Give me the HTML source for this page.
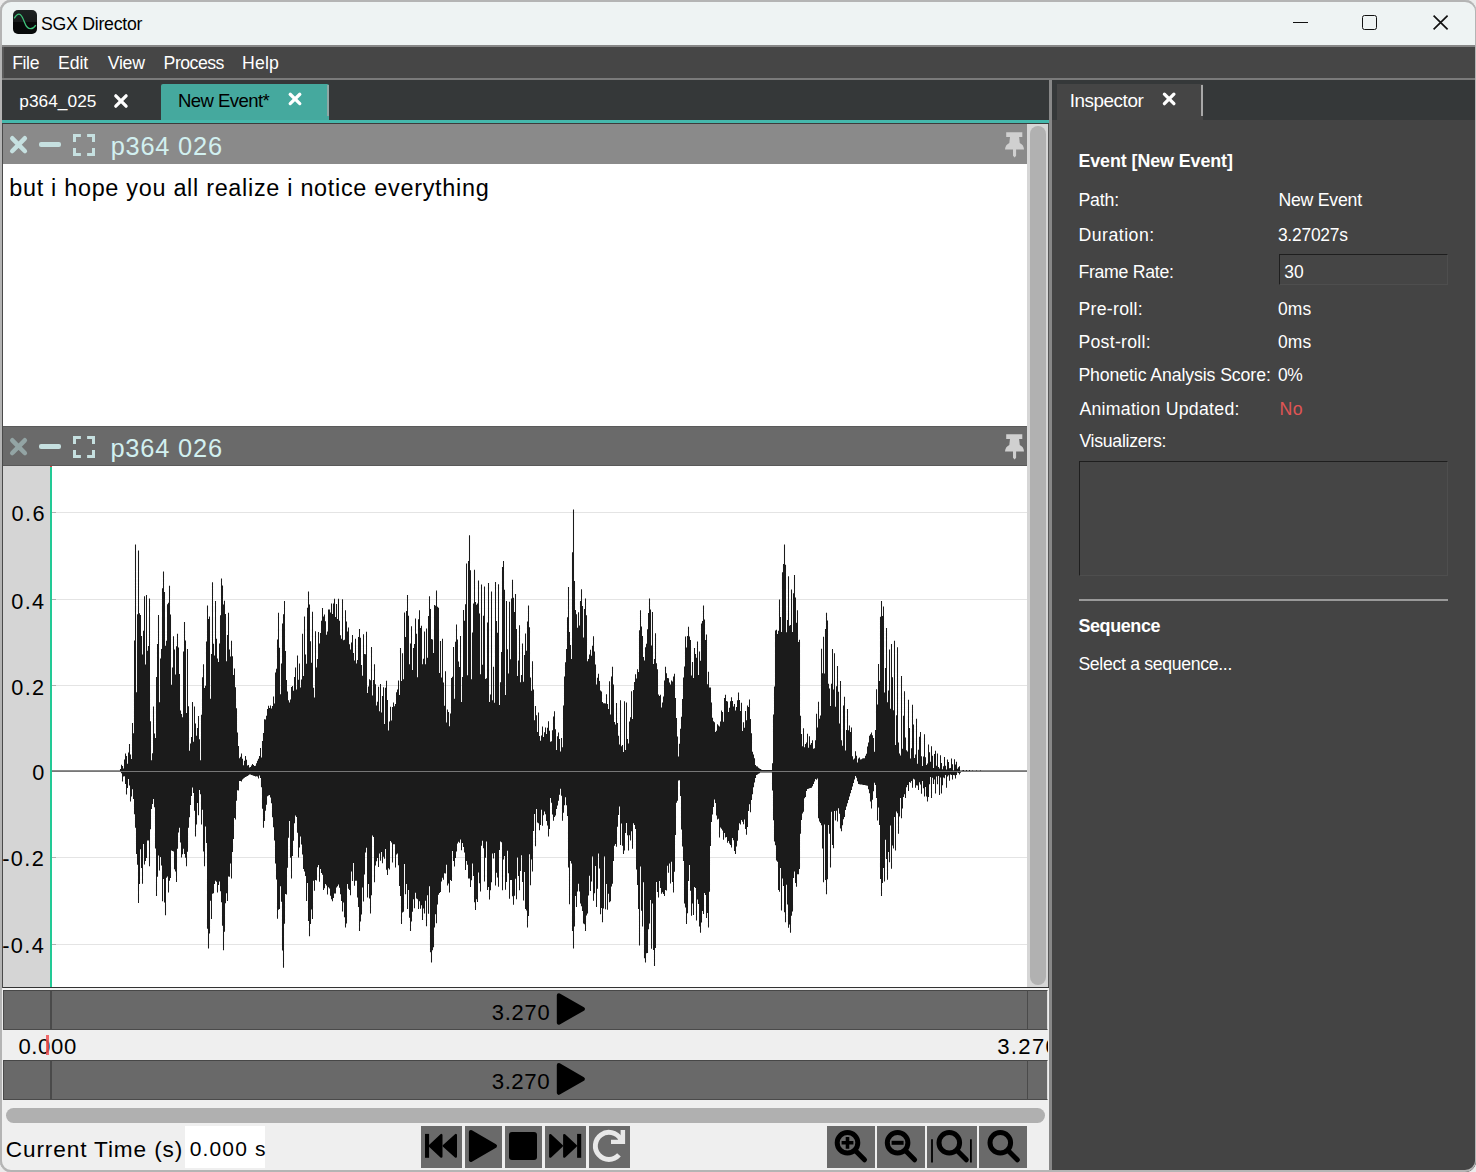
<!DOCTYPE html>
<html><head><meta charset="utf-8">
<style>
*{margin:0;padding:0;box-sizing:border-box}
html,body{width:1476px;height:1172px;overflow:hidden;background:#ececec;font-family:"Liberation Sans",sans-serif}
.a{position:absolute}
.t{position:absolute;white-space:nowrap;line-height:1}
svg{position:absolute;overflow:visible}
#win{position:absolute;left:0;top:0;width:1476px;height:1172px;border-radius:11px;overflow:hidden;background:#444}
#bord{position:absolute;left:0;top:0;width:1476px;height:1172px;border:2px solid #b4b4b4;border-right-width:1.5px;border-radius:11px;pointer-events:none}
</style></head><body>
<div id="win">
<div class="a" style="left:0px;top:0px;width:1476px;height:45px;background:#eef3f3;"></div>
<div class="a" style="left:13px;top:10px;width:24px;height:24px;border-radius:5px;background:linear-gradient(#1d2222 0%,#171b1b 48%,#080a0a 52%,#070909 100%)"></div>
<svg style="left:13px;top:10px" width="24" height="24" viewBox="0 0 24 24"><path d="M1.3 8.4 C 3 5.2, 5 4.1, 6 4.1 C 8.5 4.1, 10 8, 11.6 12.5 C 13 16.5, 15 18.7, 17.7 18.7 C 19.8 18.7, 21.5 17, 22.8 15.1" fill="none" stroke="#3fc27a" stroke-width="1.3"/></svg>
<div class="t" style="left:41px;top:15.8px;font-size:17.68px;letter-spacing:-0.245px;color:#000;">SGX Director</div>
<div class="a" style="left:1293px;top:21.6px;width:15px;height:1.7px;background:#111;"></div>
<div class="a" style="left:1362.3px;top:15.3px;width:14.6px;height:14.4px;border:1.8px solid #111;border-radius:2.5px"></div>
<svg style="left:1433px;top:15px" width="16" height="15" viewBox="0 0 16 15"><path d="M0.6 0.6L14.6 14.4M14.6 0.6L0.6 14.4" stroke="#111" stroke-width="1.7"/></svg>
<div class="a" style="left:0px;top:44.9px;width:1476px;height:2.1px;background:#878787;"></div>
<div class="a" style="left:0px;top:47px;width:1476px;height:31px;background:#464646;"></div>
<div class="a" style="left:2px;top:47px;width:2px;height:31px;background:#5a5a5a;"></div>
<div class="a" style="left:0px;top:77.8px;width:1476px;height:2.2px;background:#7a7a7a;"></div>
<div class="t" style="left:12.2px;top:55.3px;font-size:17.68px;letter-spacing:-0.4px;color:#fff;">File</div>
<div class="t" style="left:58px;top:55.3px;font-size:17.68px;letter-spacing:-0.067px;color:#fff;">Edit</div>
<div class="t" style="left:107.7px;top:55.3px;font-size:17.68px;letter-spacing:-0.233px;color:#fff;">View</div>
<div class="t" style="left:163.6px;top:55.3px;font-size:17.68px;letter-spacing:-0.5px;color:#fff;">Process</div>
<div class="t" style="left:242px;top:55.3px;font-size:17.68px;letter-spacing:0.167px;color:#fff;">Help</div>
<div class="a" style="left:0px;top:80px;width:1049px;height:40px;background:#353839;"></div>
<div class="t" style="left:19.3px;top:92.9px;font-size:17.29px;letter-spacing:0.029px;color:#fff;">p364_025</div>
<svg style="left:0;top:0" width="1" height="1"><path d="M115.8 95.8L126.1 106.2M126.1 95.8L115.8 106.2" stroke="#fff" stroke-width="3.3" stroke-linecap="round"/></svg>
<div class="a" style="left:161px;top:84px;width:168px;height:36px;background:#45a99e;border-radius:2px 2px 0 0;"></div>
<div class="a" style="left:327px;top:85px;width:1.5px;height:31px;background:#8fa8a5;"></div>
<div class="t" style="left:178px;top:92.0px;font-size:18.55px;letter-spacing:-0.556px;color:#000;">New Event*</div>
<svg style="left:0;top:0" width="1" height="1"><path d="M290.2 94.3L299.8 103.6M299.8 94.3L290.2 103.6" stroke="#fff" stroke-width="3.3" stroke-linecap="round"/></svg>
<div class="a" style="left:0px;top:120px;width:1049px;height:3px;background:#45b8ac;"></div>
<div class="a" style="left:0px;top:123px;width:1049px;height:1px;background:#3c3c3c;"></div>
<div class="a" style="left:0px;top:124px;width:1049px;height:1048px;background:#efefef;"></div>
<div class="a" style="left:2px;top:124px;width:1px;height:864px;background:#4a4a4a;"></div>
<div class="a" style="left:3px;top:124px;width:1024px;height:39.6px;background:#8a8a8a;"></div>
<svg style="left:0;top:0" width="1" height="1"><path d="M12.3 138.3L24.8 151.0M24.8 138.3L12.3 151.0" stroke="#c6e0e0" stroke-width="4.6" stroke-linecap="round"/></svg>
<div class="a" style="left:39px;top:142.2px;width:22px;height:4.8px;background:#c6e0e0;border-radius:2px;"></div>
<svg style="left:0;top:0" width="1" height="1"><path d="M74.5 141.9V135.5H80.9 M87.1 135.5H93.5V141.9 M93.5 148.1V154.5H87.1 M80.9 154.5H74.5V148.1" fill="none" stroke="#c6e0e0" stroke-width="3"/></svg>
<svg style="left:1005px;top:132px" width="20" height="26" viewBox="0 0 20 26"><path d="M1.2 0.3H17.3V4.9H14.1L14.8 11C17.5 12.3 18.9 14.5 19 17.5H11.1V23.8L9.6 25.5L8 23.8V17.5H0C0.2 14.5 1.6 12.3 4.3 11L5 4.9H1.2Z" fill="#d0d0d0"/></svg>
<div class="t" style="left:110.7px;top:134.0px;font-size:25.43px;letter-spacing:0.757px;color:#d2f0f0;">p364 026</div>
<div class="a" style="left:3px;top:163.6px;width:1024px;height:262.2px;background:#fff;"></div>
<div class="t" style="left:9.2px;top:176.6px;font-size:23.42px;letter-spacing:0.709px;color:#000;">but i hope you all realize i notice everything</div>
<div class="a" style="left:3px;top:425.8px;width:1024px;height:0.8px;background:#5a5a5a;"></div>
<div class="a" style="left:3px;top:426.5px;width:1024px;height:38.8px;background:#6a6a6a;"></div>
<div class="a" style="left:3px;top:465.2px;width:1024px;height:0.8px;background:#595959;"></div>
<svg style="left:0;top:0" width="1" height="1"><path d="M12.3 440.3L24.8 453.0M24.8 440.3L12.3 453.0" stroke="#93a4a4" stroke-width="4.6" stroke-linecap="round"/></svg>
<div class="a" style="left:39px;top:444.2px;width:22px;height:4.8px;background:#c6e0e0;border-radius:2px;"></div>
<svg style="left:0;top:0" width="1" height="1"><path d="M74.5 443.9V437.5H80.9 M87.1 437.5H93.5V443.9 M93.5 450.1V456.5H87.1 M80.9 456.5H74.5V450.1" fill="none" stroke="#c6e0e0" stroke-width="3"/></svg>
<svg style="left:1005px;top:434px" width="20" height="26" viewBox="0 0 20 26"><path d="M1.2 0.3H17.3V4.9H14.1L14.8 11C17.5 12.3 18.9 14.5 19 17.5H11.1V23.8L9.6 25.5L8 23.8V17.5H0C0.2 14.5 1.6 12.3 4.3 11L5 4.9H1.2Z" fill="#d0d0d0"/></svg>
<div class="t" style="left:110.4px;top:436.2px;font-size:25.43px;letter-spacing:0.814px;color:#d2f0f0;">p364 026</div>
<div class="a" style="left:3px;top:466px;width:47px;height:521.3px;background:#d5d5d5;"></div>
<div class="a" style="left:50px;top:466px;width:1.6px;height:521.3px;background:#22c995;"></div>
<div class="a" style="left:50px;top:466px;width:2px;height:1px;background:#e04040;"></div>
<div class="a" style="left:52px;top:466px;width:975px;height:521.3px;background:#fff;"></div>
<div class="a" style="left:52px;top:511.6px;width:975px;height:1.2px;background:#e4e4e4;"></div>
<div class="a" style="left:52px;top:511.6px;width:4px;height:1.2px;background:#b0b0b0;"></div>
<div class="a" style="left:52px;top:598.6999999999999px;width:975px;height:1.2px;background:#e4e4e4;"></div>
<div class="a" style="left:52px;top:598.6999999999999px;width:4px;height:1.2px;background:#b0b0b0;"></div>
<div class="a" style="left:52px;top:684.8px;width:975px;height:1.2px;background:#e4e4e4;"></div>
<div class="a" style="left:52px;top:684.8px;width:4px;height:1.2px;background:#b0b0b0;"></div>
<div class="a" style="left:52px;top:770.6px;width:975px;height:1.2px;background:#e4e4e4;"></div>
<div class="a" style="left:52px;top:770.6px;width:4px;height:1.2px;background:#b0b0b0;"></div>
<div class="a" style="left:52px;top:856.6999999999999px;width:975px;height:1.2px;background:#e4e4e4;"></div>
<div class="a" style="left:52px;top:856.6999999999999px;width:4px;height:1.2px;background:#b0b0b0;"></div>
<div class="a" style="left:52px;top:943.6px;width:975px;height:1.2px;background:#e4e4e4;"></div>
<div class="a" style="left:52px;top:943.6px;width:4px;height:1.2px;background:#b0b0b0;"></div>
<div class="t" style="left:11.6px;top:503.4px;font-size:21.71px;letter-spacing:1.35px;color:#000;">0.6</div>
<div class="t" style="left:11.3px;top:590.5px;font-size:21.71px;letter-spacing:1.35px;color:#000">0.4</div>
<div class="t" style="left:11.3px;top:676.6px;font-size:21.71px;letter-spacing:1.35px;color:#000">0.2</div>
<div class="t" style="left:32.3px;top:762.3px;font-size:21.71px;letter-spacing:1.35px;color:#000">0</div>
<div class="t" style="left:2.3px;top:848.4px;font-size:21.71px;letter-spacing:1.35px;color:#000">-0.2</div>
<div class="t" style="left:2.3px;top:935.0px;font-size:21.71px;letter-spacing:1.35px;color:#000">-0.4</div>
<svg style="left:0;top:0" width="1" height="1"><path d="M52.5 770.5V772.0M53.5 770.5V772.0M54.5 770.5V772.0M55.5 770.5V772.0M56.5 770.5V772.0M57.5 770.5V772.0M58.5 770.5V772.0M59.5 770.5V772.0M60.5 770.5V772.0M61.5 770.5V772.0M62.5 770.5V772.0M63.5 770.5V772.0M64.5 770.5V772.0M65.5 770.5V772.0M66.5 770.5V772.0M67.5 770.5V772.0M68.5 770.5V772.0M69.5 770.5V772.0M70.5 770.5V772.0M71.5 770.5V772.0M72.5 770.5V772.0M73.5 770.5V772.0M74.5 770.5V772.0M75.5 770.5V772.0M76.5 770.5V772.0M77.5 770.5V772.0M78.5 770.5V772.0M79.5 770.5V772.0M80.5 770.5V772.0M81.5 770.5V772.0M82.5 770.5V772.0M83.5 770.5V772.0M84.5 770.5V772.0M85.5 770.5V772.0M86.5 770.5V772.0M87.5 770.5V772.0M88.5 770.5V772.0M89.5 770.5V772.0M90.5 770.5V772.0M91.5 770.5V772.0M92.5 770.5V772.0M93.5 770.5V772.0M94.5 770.5V772.0M95.5 770.5V772.0M96.5 770.5V772.0M97.5 770.5V772.0M98.5 770.5V772.0M99.5 770.5V772.0M100.5 770.5V772.0M101.5 770.5V772.0M102.5 770.5V772.0M103.5 770.5V772.0M104.5 770.5V772.0M105.5 770.5V772.0M106.5 770.5V772.0M107.5 770.5V772.0M108.5 770.5V772.0M109.5 770.5V772.0M110.5 770.5V772.0M111.5 770.5V772.0M112.5 770.5V772.0M113.5 770.5V772.0M114.5 770.5V772.0M115.5 770.5V772.0M116.5 770.5V772.0M117.5 770.5V772.0M118.5 770.5V772.0M119.5 770.5V772.0M120.5 768.9V772.0M121.5 764.8V773.2M122.5 765.9V781.4M123.5 768.6V776.6M124.5 759.6V776.3M125.5 753.5V784.0M126.5 756.1V794.5M127.5 763.8V787.9M128.5 752.4V779.0M129.5 744.1V785.5M130.5 754.4V801.5M131.5 759.0V796.4M132.5 723.0V789.3M133.5 733.3V799.1M134.5 640.6V814.2M135.5 544.6V827.8M136.5 692.3V854.0M137.5 614.3V864.8M138.5 550.5V903.0M139.5 613.2V884.1M140.5 615.0V849.2M141.5 636.0V867.9M142.5 654.6V883.7M143.5 630.7V843.9M144.5 596.2V864.5M145.5 664.4V861.0M146.5 595.1V858.0M147.5 650.8V840.5M148.5 646.0V840.4M149.5 598.6V866.2M150.5 721.2V829.2M151.5 760.2V809.1M152.5 753.3V803.9M153.5 706.6V799.0M154.5 733.6V807.2M155.5 737.9V848.6M156.5 677.1V896.0M157.5 643.9V876.7M158.5 615.0V855.6M159.5 702.2V870.6M160.5 658.4V856.9M161.5 649.0V865.6M162.5 588.3V901.3M163.5 571.6V878.9M164.5 591.9V902.6M165.5 645.8V915.2M166.5 640.8V877.7M167.5 604.3V876.6M168.5 602.7V892.5M169.5 585.7V880.7M170.5 614.6V878.0M171.5 684.7V850.5M172.5 667.4V851.1M173.5 636.2V851.4M174.5 649.6V869.3M175.5 674.4V871.5M176.5 646.3V882.0M177.5 633.8V848.8M178.5 647.5V832.5M179.5 674.1V827.8M180.5 710.5V842.5M181.5 714.1V857.5M182.5 717.2V854.2M183.5 651.6V848.7M184.5 622.1V854.0M185.5 640.6V857.8M186.5 713.0V866.2M187.5 649.0V851.8M188.5 706.2V827.7M189.5 750.8V817.2M190.5 743.4V804.9M191.5 737.1V796.0M192.5 701.9V787.5M193.5 741.8V793.1M194.5 706.6V810.7M195.5 723.5V836.5M196.5 735.7V824.6M197.5 728.0V803.1M198.5 716.0V815.3M199.5 739.3V789.9M200.5 760.3V794.2M201.5 714.8V824.4M202.5 677.3V809.8M203.5 664.3V851.4M204.5 688.0V866.2M205.5 685.8V826.4M206.5 641.5V843.0M207.5 605.6V928.7M208.5 619.1V948.4M209.5 616.5V933.5M210.5 698.7V900.8M211.5 654.0V918.9M212.5 582.2V893.8M213.5 643.7V893.3M214.5 655.5V884.1M215.5 600.9V880.7M216.5 638.7V881.7M217.5 658.4V892.5M218.5 662.1V885.1M219.5 643.6V881.6M220.5 615.3V891.3M221.5 578.6V902.2M222.5 585.6V925.7M223.5 604.6V950.2M224.5 600.7V931.7M225.5 613.9V903.2M226.5 661.2V893.2M227.5 635.0V900.9M228.5 612.7V876.6M229.5 649.6V876.8M230.5 656.6V863.4M231.5 640.8V878.5M232.5 656.2V852.1M233.5 675.0V838.9M234.5 668.5V817.9M235.5 687.2V819.5M236.5 708.3V800.7M237.5 732.6V790.2M238.5 746.1V790.4M239.5 758.2V780.9M240.5 756.8V781.0M241.5 753.5V781.5M242.5 758.7V779.6M243.5 765.3V778.4M244.5 760.7V777.8M245.5 755.9V777.1M246.5 759.7V776.5M247.5 765.5V775.9M248.5 765.1V775.3M249.5 767.5V774.6M250.5 766.9V774.6M251.5 765.4V775.0M252.5 764.1V775.3M253.5 765.0V775.7M254.5 765.9V776.1M255.5 765.7V776.5M256.5 763.2V776.3M257.5 760.7V776.4M258.5 758.7V778.4M259.5 755.9V775.6M260.5 748.1V777.9M261.5 757.4V787.3M262.5 741.0V808.7M263.5 733.1V827.7M264.5 719.3V821.1M265.5 719.4V810.8M266.5 715.8V804.7M267.5 708.9V796.2M268.5 705.7V795.5M269.5 708.1V794.9M270.5 705.5V797.4M271.5 708.4V803.2M272.5 706.1V817.2M273.5 696.6V827.3M274.5 703.6V840.6M275.5 672.5V863.4M276.5 668.7V879.5M277.5 639.4V918.7M278.5 612.7V909.7M279.5 647.7V909.0M280.5 694.3V886.2M281.5 663.4V901.7M282.5 623.4V950.6M283.5 614.3V967.7M284.5 600.9V923.7M285.5 651.0V894.1M286.5 679.9V894.4M287.5 691.5V867.8M288.5 700.2V837.8M289.5 702.6V821.0M290.5 699.6V857.8M291.5 687.0V878.5M292.5 686.0V855.9M293.5 690.8V840.7M294.5 677.0V823.3M295.5 667.4V815.4M296.5 689.4V817.0M297.5 655.5V832.8M298.5 679.7V857.5M299.5 663.4V847.6M300.5 687.6V836.5M301.5 679.6V844.4M302.5 633.7V854.4M303.5 676.0V869.0M304.5 616.4V871.5M305.5 654.5V876.0M306.5 663.7V901.0M307.5 607.8V883.0M308.5 591.5V921.0M309.5 604.5V936.2M310.5 641.2V924.1M311.5 662.7V909.5M312.5 611.8V919.0M313.5 687.8V880.8M314.5 697.6V890.8M315.5 631.2V880.1M316.5 667.5V880.4M317.5 659.1V867.3M318.5 632.1V865.1M319.5 643.5V881.7M320.5 633.0V868.9M321.5 620.7V873.0M322.5 608.0V874.8M323.5 616.5V890.1M324.5 614.5V888.3M325.5 621.3V884.0M326.5 634.7V885.6M327.5 631.6V894.4M328.5 609.4V887.3M329.5 609.4V888.6M330.5 612.6V895.7M331.5 603.4V899.2M332.5 614.0V901.2M333.5 603.4V898.1M334.5 598.7V893.6M335.5 616.9V893.6M336.5 604.1V887.4M337.5 618.9V886.3M338.5 598.8V884.5M339.5 620.8V887.8M340.5 635.2V894.2M341.5 638.7V900.9M342.5 599.2V911.5M343.5 640.3V902.5M344.5 639.7V917.3M345.5 610.3V927.5M346.5 621.4V923.6M347.5 631.6V883.9M348.5 627.6V888.7M349.5 644.3V889.9M350.5 649.4V895.3M351.5 642.6V871.6M352.5 635.0V881.1M353.5 653.0V863.1M354.5 660.6V885.7M355.5 638.7V880.8M356.5 663.4V880.7M357.5 660.1V897.4M358.5 637.1V907.1M359.5 629.1V931.0M360.5 637.7V921.4M361.5 665.0V914.6M362.5 675.8V887.4M363.5 634.2V901.5M364.5 654.0V874.4M365.5 654.3V852.5M366.5 631.7V847.7M367.5 692.9V897.4M368.5 686.4V884.0M369.5 679.2V898.6M370.5 680.2V913.5M371.5 646.9V895.2M372.5 695.6V835.6M373.5 679.9V837.1M374.5 664.2V882.2M375.5 684.2V865.5M376.5 705.5V861.3M377.5 701.7V858.1M378.5 686.7V867.1M379.5 711.2V853.5M380.5 684.0V860.8M381.5 712.4V852.0M382.5 695.9V863.3M383.5 687.3V856.8M384.5 723.9V858.8M385.5 687.8V848.9M386.5 680.8V869.8M387.5 699.9V875.0M388.5 730.6V868.2M389.5 721.6V869.5M390.5 706.7V841.1M391.5 720.4V842.4M392.5 707.0V862.5M393.5 702.6V844.3M394.5 706.3V844.3M395.5 704.0V867.5M396.5 692.3V854.5M397.5 689.6V853.4M398.5 680.5V865.3M399.5 695.1V886.0M400.5 647.9V896.1M401.5 680.9V924.0M402.5 653.3V912.6M403.5 679.2V911.7M404.5 612.4V863.9M405.5 636.9V894.2M406.5 611.0V884.1M407.5 595.1V908.9M408.5 615.8V889.9M409.5 664.3V917.8M410.5 643.5V931.0M411.5 626.2V921.6M412.5 669.9V911.7M413.5 648.0V899.3M414.5 644.0V908.3M415.5 618.5V892.8M416.5 633.7V898.4M417.5 677.3V899.3M418.5 619.3V909.1M419.5 610.3V901.3M420.5 628.1V908.7M421.5 625.8V905.2M422.5 664.3V920.1M423.5 658.8V908.5M424.5 631.5V913.4M425.5 664.3V900.7M426.5 628.4V926.3M427.5 657.7V895.2M428.5 615.9V913.8M429.5 596.2V886.2M430.5 609.1V952.2M431.5 639.0V962.4M432.5 639.6V950.2M433.5 652.9V947.3M434.5 605.0V927.4M435.5 605.7V914.2M436.5 590.4V923.3M437.5 606.8V904.6M438.5 607.8V894.8M439.5 673.1V893.0M440.5 641.0V892.1M441.5 677.6V881.4M442.5 638.8V877.7M443.5 682.4V879.7M444.5 705.8V873.3M445.5 671.2V873.6M446.5 722.4V864.7M447.5 709.4V885.5M448.5 711.9V883.6M449.5 726.2V892.5M450.5 713.4V880.1M451.5 678.1V881.0M452.5 676.7V851.1M453.5 647.0V861.0M454.5 698.8V866.5M455.5 641.7V858.0M456.5 624.4V851.4M457.5 639.5V843.6M458.5 661.6V841.8M459.5 667.0V842.8M460.5 636.1V839.4M461.5 701.9V850.3M462.5 677.1V842.9M463.5 610.1V846.9M464.5 620.8V852.6M465.5 604.3V870.1M466.5 563.5V861.1M467.5 675.2V864.8M468.5 561.0V878.6M469.5 535.2V878.4M470.5 570.2V887.1M471.5 679.3V880.3M472.5 632.4V863.5M473.5 603.4V876.0M474.5 569.7V902.3M475.5 602.0V910.0M476.5 604.7V899.2M477.5 603.4V902.0M478.5 580.5V872.5M479.5 613.5V883.3M480.5 674.2V891.6M481.5 584.4V845.8M482.5 664.7V840.8M483.5 615.7V848.3M484.5 586.6V881.4M485.5 679.0V857.7M486.5 678.3V841.4M487.5 622.4V890.0M488.5 582.9V886.9M489.5 701.9V899.5M490.5 694.6V890.2M491.5 591.4V882.3M492.5 700.3V853.4M493.5 666.7V858.6M494.5 702.7V853.0M495.5 582.0V885.6M496.5 621.0V872.7M497.5 632.7V877.6M498.5 584.2V886.8M499.5 705.0V850.0M500.5 682.2V841.6M501.5 652.1V842.2M502.5 567.0V890.2M503.5 561.0V859.5M504.5 589.7V856.1M505.5 695.0V889.8M506.5 600.9V882.0M507.5 649.3V850.7M508.5 673.5V873.2M509.5 601.7V898.7M510.5 659.2V879.9M511.5 598.6V879.9M512.5 579.8V896.3M513.5 597.7V904.7M514.5 611.9V895.8M515.5 594.1V878.8M516.5 629.1V899.3M517.5 676.0V857.5M518.5 660.5V876.1M519.5 625.3V890.3M520.5 682.2V871.0M521.5 675.0V855.2M522.5 643.4V881.9M523.5 681.8V900.4M524.5 655.1V871.9M525.5 633.5V909.0M526.5 650.8V910.5M527.5 621.5V927.5M528.5 605.6V916.0M529.5 627.2V854.3M530.5 677.6V885.2M531.5 690.8V859.5M532.5 661.3V871.4M533.5 689.5V831.1M534.5 720.3V814.0M535.5 706.1V846.3M536.5 715.2V809.1M537.5 731.9V822.5M538.5 712.5V823.3M539.5 736.1V830.3M540.5 740.7V825.0M541.5 735.6V809.8M542.5 726.4V825.7M543.5 737.1V815.3M544.5 732.3V811.4M545.5 727.5V814.2M546.5 734.0V821.1M547.5 727.7V825.5M548.5 721.3V836.5M549.5 730.7V829.1M550.5 741.8V798.0M551.5 741.3V802.8M552.5 730.2V814.4M553.5 716.6V820.7M554.5 711.3V817.1M555.5 729.2V815.5M556.5 750.1V808.9M557.5 736.3V805.4M558.5 732.4V800.7M559.5 739.0V794.7M560.5 751.5V788.7M561.5 737.9V795.8M562.5 747.3V820.7M563.5 705.6V812.7M564.5 676.5V805.2M565.5 662.2V797.3M566.5 648.9V805.3M567.5 617.3V816.0M568.5 586.9V867.5M569.5 632.0V904.3M570.5 645.0V861.1M571.5 659.0V863.5M572.5 552.2V930.9M573.5 509.4V948.4M574.5 580.9V926.6M575.5 610.1V896.1M576.5 614.2V907.0M577.5 627.8V891.5M578.5 612.2V883.8M579.5 625.6V891.6M580.5 601.0V903.5M581.5 589.2V906.2M582.5 605.9V910.9M583.5 637.6V923.6M584.5 608.9V924.2M585.5 598.6V931.0M586.5 615.3V915.6M587.5 661.2V913.6M588.5 659.1V895.4M589.5 654.4V875.8M590.5 649.7V890.9M591.5 655.8V881.6M592.5 645.7V856.4M593.5 636.2V900.8M594.5 651.5V893.3M595.5 664.5V865.9M596.5 684.4V906.9M597.5 677.8V888.8M598.5 673.7V853.5M599.5 681.1V868.4M600.5 690.5V914.2M601.5 691.6V908.0M602.5 701.9V922.2M603.5 703.3V908.6M604.5 703.3V856.4M605.5 703.5V909.3M606.5 694.3V884.0M607.5 704.0V909.8M608.5 709.1V893.8M609.5 681.3V902.2M610.5 714.5V901.3M611.5 676.4V886.5M612.5 666.7V883.8M613.5 684.4V861.0M614.5 722.1V845.8M615.5 724.4V844.1M616.5 703.0V846.8M617.5 723.0V826.8M618.5 735.7V814.9M619.5 744.6V806.4M620.5 700.2V844.9M621.5 746.3V823.5M622.5 745.0V845.7M623.5 752.0V854.0M624.5 701.3V850.4M625.5 750.0V833.1M626.5 702.4V823.1M627.5 738.9V835.3M628.5 743.5V850.6M629.5 721.4V835.3M630.5 717.2V840.6M631.5 691.3V831.3M632.5 719.0V848.7M633.5 690.0V823.2M634.5 681.9V825.1M635.5 674.3V829.0M636.5 678.6V869.4M637.5 669.3V885.1M638.5 671.9V909.0M639.5 630.3V945.4M640.5 610.3V866.5M641.5 626.5V910.8M642.5 636.0V926.4M643.5 657.1V882.2M644.5 660.6V958.2M645.5 647.3V962.4M646.5 643.8V953.2M647.5 629.2V952.9M648.5 613.0V929.2M649.5 598.6V923.4M650.5 609.4V899.9M651.5 645.6V948.7M652.5 612.1V903.6M653.5 663.9V949.9M654.5 659.1V965.9M655.5 633.2V948.0M656.5 663.3V882.1M657.5 669.2V892.1M658.5 694.4V897.6M659.5 695.9V881.0M660.5 694.8V887.9M661.5 707.4V893.7M662.5 702.6V892.3M663.5 696.5V894.1M664.5 680.4V896.0M665.5 666.7V890.0M666.5 673.3V890.6M667.5 678.1V865.8M668.5 678.3V872.7M669.5 682.4V863.5M670.5 684.5V883.4M671.5 680.5V861.8M672.5 681.5V882.1M673.5 676.6V892.5M674.5 673.7V871.7M675.5 698.1V835.1M676.5 718.1V802.7M677.5 736.5V800.7M678.5 756.4V780.5M679.5 743.7V780.3M680.5 728.7V796.0M681.5 716.7V829.5M682.5 698.9V846.6M683.5 677.4V861.0M684.5 666.6V903.4M685.5 636.6V907.4M686.5 647.6V924.0M687.5 636.0V913.2M688.5 626.8V881.0M689.5 636.5V865.0M690.5 640.0V890.8M691.5 675.6V915.8M692.5 662.1V903.4M693.5 678.0V915.1M694.5 648.1V887.1M695.5 654.1V888.1M696.5 657.8V920.4M697.5 641.6V899.6M698.5 675.0V904.1M699.5 651.6V926.4M700.5 660.8V932.7M701.5 623.5V922.4M702.5 620.9V911.1M703.5 605.6V914.0M704.5 619.5V893.1M705.5 639.9V895.1M706.5 634.6V918.0M707.5 684.3V913.1M708.5 671.8V927.5M709.5 687.4V891.8M710.5 687.4V845.9M711.5 702.4V822.1M712.5 717.7V814.6M713.5 721.2V807.1M714.5 722.3V799.6M715.5 731.9V803.1M716.5 730.7V815.6M717.5 724.3V819.4M718.5 725.4V818.7M719.5 726.4V837.5M720.5 721.4V827.5M721.5 710.4V828.8M722.5 711.9V830.4M723.5 721.8V839.7M724.5 698.1V833.0M725.5 694.8V837.6M726.5 701.0V837.0M727.5 701.6V842.7M728.5 712.0V840.9M729.5 707.8V843.5M730.5 701.3V844.9M731.5 697.2V847.5M732.5 701.0V838.1M733.5 706.4V840.3M734.5 703.9V850.9M735.5 710.4V854.0M736.5 707.0V846.4M737.5 700.3V840.8M738.5 692.5V830.3M739.5 700.1V823.2M740.5 711.1V824.5M741.5 702.7V820.1M742.5 731.0V821.7M743.5 722.2V824.3M744.5 727.7V819.4M745.5 710.9V829.0M746.5 720.2V834.7M747.5 705.5V827.0M748.5 707.0V811.0M749.5 699.5V804.3M750.5 718.9V812.2M751.5 733.3V800.0M752.5 751.8V794.2M753.5 754.5V787.2M754.5 758.3V782.5M755.5 764.9V777.9M756.5 766.2V775.0M757.5 766.6V774.4M758.5 767.7V773.8M759.5 768.4V773.2M760.5 769.0V772.6M761.5 769.8V772.6M762.5 770.0V772.6M763.5 770.0V772.6M764.5 770.0V772.6M765.5 770.0V772.6M766.5 770.0V772.6M767.5 770.0V772.6M768.5 770.0V772.6M769.5 770.0V772.6M770.5 770.0V772.6M771.5 770.0V772.6M772.5 763.2V790.4M773.5 714.4V820.3M774.5 686.4V841.4M775.5 630.4V845.2M776.5 629.8V860.6M777.5 633.9V861.7M778.5 630.8V889.9M779.5 599.5V891.7M780.5 617.1V868.0M781.5 632.1V910.5M782.5 572.2V878.5M783.5 564.0V886.1M784.5 544.6V912.2M785.5 564.8V922.3M786.5 632.2V884.7M787.5 620.0V904.5M788.5 576.3V927.8M789.5 625.8V924.4M790.5 624.9V932.7M791.5 589.6V915.7M792.5 631.9V911.4M793.5 593.2V878.0M794.5 575.1V871.6M795.5 597.5V883.1M796.5 622.7V886.7M797.5 610.3V874.2M798.5 642.1V874.3M799.5 639.7V868.9M800.5 715.7V833.8M801.5 734.0V820.0M802.5 746.2V813.5M803.5 728.3V811.8M804.5 747.2V798.3M805.5 744.0V796.9M806.5 742.5V790.9M807.5 733.7V789.0M808.5 747.8V788.7M809.5 736.2V788.3M810.5 744.7V788.0M811.5 743.0V787.7M812.5 740.3V786.3M813.5 748.8V783.9M814.5 748.3V781.5M815.5 740.2V779.1M816.5 713.7V779.8M817.5 727.4V778.6M818.5 701.7V818.3M819.5 718.7V821.4M820.5 715.6V822.9M821.5 648.7V825.2M822.5 673.3V848.6M823.5 636.8V882.3M824.5 673.4V824.6M825.5 628.9V880.0M826.5 612.7V894.2M827.5 620.4V879.3M828.5 683.7V825.0M829.5 688.6V833.8M830.5 706.0V867.6M831.5 683.7V811.8M832.5 648.9V845.1M833.5 689.6V848.3M834.5 653.2V811.1M835.5 706.8V820.6M836.5 686.2V810.7M837.5 665.9V821.6M838.5 691.7V808.3M839.5 723.4V813.7M840.5 680.9V828.4M841.5 740.2V831.2M842.5 745.7V825.2M843.5 705.4V819.2M844.5 696.8V816.9M845.5 750.6V810.0M846.5 730.1V806.4M847.5 709.1V803.3M848.5 730.3V799.9M849.5 725.5V796.6M850.5 732.1V793.3M851.5 727.6V789.9M852.5 756.2V786.5M853.5 759.5V783.0M854.5 758.4V779.5M855.5 751.2V776.0M856.5 755.7V777.8M857.5 762.6V781.2M858.5 758.4V784.0M859.5 757.5V784.2M860.5 759.4V784.4M861.5 759.3V784.6M862.5 758.4V784.8M863.5 758.2V784.9M864.5 758.2V785.1M865.5 755.8V785.3M866.5 753.7V785.5M867.5 746.6V785.7M868.5 742.5V789.2M869.5 735.8V793.3M870.5 734.2V801.5M871.5 732.4V808.5M872.5 735.2V799.8M873.5 738.1V791.3M874.5 751.7V782.8M875.5 729.9V784.9M876.5 689.2V798.0M877.5 704.5V820.5M878.5 664.1V807.5M879.5 681.1V824.9M880.5 616.8V879.1M881.5 600.9V896.0M882.5 616.1V882.9M883.5 606.4V868.1M884.5 692.5V881.4M885.5 667.9V839.8M886.5 628.0V859.1M887.5 702.3V879.8M888.5 690.5V852.0M889.5 649.4V862.3M890.5 708.7V825.6M891.5 643.9V868.7M892.5 677.3V845.5M893.5 710.3V848.5M894.5 640.8V816.9M895.5 744.9V850.4M896.5 715.3V811.6M897.5 647.2V813.3M898.5 742.4V833.8M899.5 753.6V816.6M900.5 755.4V797.9M901.5 675.9V818.3M902.5 748.8V808.6M903.5 715.8V797.1M904.5 691.2V794.2M905.5 737.5V798.1M906.5 750.2V787.3M907.5 751.6V784.9M908.5 699.8V790.9M909.5 727.9V782.0M910.5 758.6V782.7M911.5 748.2V781.1M912.5 704.8V787.7M913.5 724.4V778.7M914.5 758.0V779.5M915.5 754.4V787.8M916.5 718.7V785.3M917.5 763.7V785.4M918.5 749.7V790.1M919.5 736.7V782.3M920.5 732.0V784.6M921.5 756.2V793.7M922.5 766.0V781.0M923.5 756.4V788.3M924.5 734.2V796.6M925.5 757.2V787.0M926.5 765.1V796.5M927.5 763.6V801.5M928.5 744.5V796.9M929.5 752.3V784.2M930.5 761.8V777.1M931.5 746.2V797.9M932.5 755.7V777.8M933.5 767.9V784.0M934.5 754.1V779.5M935.5 750.8V793.5M936.5 765.7V776.6M937.5 753.6V784.2M938.5 767.1V776.1M939.5 768.4V795.1M940.5 755.2V777.5M941.5 763.0V793.5M942.5 769.2V785.2M943.5 766.2V777.5M944.5 757.0V778.3M945.5 765.7V775.1M946.5 769.4V787.8M947.5 759.4V776.6M948.5 762.1V775.3M949.5 768.2V780.7M950.5 768.0V774.4M951.5 758.5V775.0M952.5 764.3V779.5M953.5 770.3V775.0M954.5 759.2V775.3M955.5 764.6V778.4M956.5 761.7V775.1M957.5 768.8V772.6M958.5 767.2V773.0M959.5 766.2V774.5M960.5 770.5V772.8M961.5 770.5V772.0M962.5 770.2V772.0M963.5 769.9V772.1M964.5 770.5V772.0M965.5 770.5V772.0M966.5 770.1V772.0M967.5 770.5V772.0M968.5 770.5V772.0M969.5 770.1V772.0M970.5 770.5V772.0M971.5 770.4V772.0M972.5 770.2V772.0M973.5 770.5V772.0M974.5 770.5V772.0M975.5 770.5V772.0M976.5 770.2V772.0M977.5 770.5V772.0M978.5 770.5V772.0M979.5 770.5V772.0M980.5 770.3V772.0M981.5 770.5V772.0M982.5 770.5V772.0M983.5 770.5V772.0M984.5 770.4V772.0M985.5 770.5V772.0M986.5 770.5V772.0M987.5 770.5V772.0M988.5 770.5V772.0M989.5 770.5V772.0M990.5 770.5V772.0M991.5 770.5V772.0M992.5 770.5V772.0M993.5 770.5V772.0M994.5 770.5V772.0M995.5 770.5V772.0M996.5 770.5V772.0M997.5 770.5V772.0M998.5 770.5V772.0M999.5 770.5V772.0M1000.5 770.5V772.0M1001.5 770.5V772.0M1002.5 770.5V772.0M1003.5 770.5V772.0M1004.5 770.5V772.0M1005.5 770.5V772.0M1006.5 770.5V772.0M1007.5 770.5V772.0M1008.5 770.5V772.0M1009.5 770.5V772.0M1010.5 770.5V772.0M1011.5 770.5V772.0M1012.5 770.5V772.0M1013.5 770.5V772.0M1014.5 770.5V772.0M1015.5 770.5V772.0M1016.5 770.5V772.0M1017.5 770.5V772.0M1018.5 770.5V772.0M1019.5 770.5V772.0M1020.5 770.5V772.0M1021.5 770.5V772.0M1022.5 770.5V772.0M1023.5 770.5V772.0M1024.5 770.5V772.0M1025.5 770.5V772.0M1026.5 770.5V772.0" stroke="#1b1b1b" stroke-width="1.05"/></svg>
<div class="a" style="left:52px;top:770.7px;width:975px;height:1px;background:#777;"></div>
<div class="a" style="left:1027px;top:124px;width:21px;height:863.3px;background:#d6d6d6;"></div>
<div class="a" style="left:1030px;top:126.2px;width:16px;height:858.6px;background:#b1b1b1;border-radius:8px;"></div>
<div class="a" style="left:1047.8px;top:124px;width:1.2px;height:864px;background:#555;"></div>
<div class="a" style="left:3px;top:987.3px;width:1046px;height:1.2px;background:#333;"></div>
<div class="a" style="left:3px;top:988.4px;width:1045px;height:1.4px;background:#f4f4f4;"></div>
<div class="a" style="left:3px;top:989.8px;width:1045px;height:40px;background:#696969;border-top:1px solid #474747;border-bottom:1px solid #4a4a4a;border-right:1px solid #ddd;border-left:1px solid #4a4a4a;"></div>
<div class="a" style="left:50px;top:989.8px;width:1.5px;height:40px;background:#4a4a4a;"></div>
<div class="a" style="left:1026.5px;top:989.8px;width:1.5px;height:40px;background:#4a4a4a;"></div>
<div class="t" style="left:491.7px;top:1001.5px;font-size:21.86px;letter-spacing:0.8px;color:#000;">3.270</div>
<svg style="left:0;top:0" width="1" height="1"><path d="M558.8 995.2L582.9 1008.95L558.8 1022.7Z" fill="#000" stroke="#000" stroke-width="4" stroke-linejoin="round"/></svg>
<div class="a" style="left:3px;top:1059.8px;width:1045px;height:40px;background:#696969;border-top:1px solid #474747;border-bottom:1px solid #4a4a4a;border-right:1px solid #ddd;border-left:1px solid #4a4a4a;"></div>
<div class="a" style="left:50px;top:1059.8px;width:1.5px;height:40px;background:#4a4a4a;"></div>
<div class="a" style="left:1026.5px;top:1059.8px;width:1.5px;height:40px;background:#4a4a4a;"></div>
<div class="t" style="left:491.7px;top:1071.4px;font-size:22.29px;letter-spacing:0.55px;color:#000;">3.270</div>
<svg style="left:0;top:0" width="1" height="1"><path d="M558.8 1065L582.9 1078.9L558.8 1092.8Z" fill="#000" stroke="#000" stroke-width="4" stroke-linejoin="round"/></svg>
<div class="a" style="left:3px;top:1030px;width:1045px;height:29.8px;background:#efefef;"></div>
<div class="t" style="left:18.4px;top:1036.3px;font-size:22.14px;letter-spacing:0.625px;color:#000;">0.000</div>
<div class="a" style="left:980px;top:1030px;width:68px;height:30px;overflow:hidden"><div class="t" style="left:17.2px;top:6.0px;font-size:22.14px;letter-spacing:1.33px;color:#000">3.270</div></div>
<div class="a" style="left:46.4px;top:1035.3px;width:3.1px;height:19.5px;background:rgba(240,80,80,0.85);"></div>
<div class="a" style="left:6px;top:1107.6px;width:1039.2px;height:15.2px;background:#b0b0b0;border-radius:7.6px;"></div>
<div class="t" style="left:5.8px;top:1139.2px;font-size:22.61px;letter-spacing:0.88px;color:#000;">Current Time (s)</div>
<div class="a" style="left:185.4px;top:1126px;width:79.8px;height:41.5px;background:#fff;"></div>
<div class="t" style="left:189.7px;top:1137.8px;font-size:21.0px;letter-spacing:1.15px;color:#000;">0.000 s</div>
<div class="a" style="left:420.6px;top:1126px;width:41.599999999999966px;height:41.7px;background:#6a6a6a;"></div>
<div class="a" style="left:464.5px;top:1126px;width:37.80000000000001px;height:41.7px;background:#6a6a6a;"></div>
<div class="a" style="left:504.7px;top:1126px;width:37.80000000000001px;height:41.7px;background:#6a6a6a;"></div>
<div class="a" style="left:544.8px;top:1126px;width:41.60000000000002px;height:41.7px;background:#6a6a6a;"></div>
<div class="a" style="left:588.7px;top:1126px;width:41.799999999999955px;height:41.7px;background:#6a6a6a;"></div>
<div class="a" style="left:827px;top:1126px;width:47.799999999999955px;height:41.7px;background:#6a6a6a;"></div>
<div class="a" style="left:877.2px;top:1126px;width:47.69999999999993px;height:41.7px;background:#6a6a6a;"></div>
<div class="a" style="left:927px;top:1126px;width:49.89999999999998px;height:41.7px;background:#6a6a6a;"></div>
<div class="a" style="left:979px;top:1126px;width:47.799999999999955px;height:41.7px;background:#6a6a6a;"></div>
<svg style="left:0;top:0" width="1" height="1"><rect x="425" y="1133.9" width="4.1" height="23.9" fill="#000"/><rect x="577.1" y="1133.9" width="4.1" height="23.9" fill="#000"/><g fill="#000" stroke="#000" stroke-linejoin="round" stroke-width="2.4"><path d="M429.8 1145.85L441.3 1135.1V1156.6Z"/><path d="M443.8 1145.85L455.8 1135.1V1156.6Z"/><path d="M550.3 1135.1L561.8 1145.85L550.3 1156.6Z"/><path d="M564.3 1135.1L575.8 1145.85L564.3 1156.6Z"/></g></svg>
<svg style="left:0;top:0" width="1" height="1"><path d="M470.9 1132L495 1145.95L470.9 1159.9Z" fill="#000" stroke="#000" stroke-width="4" stroke-linejoin="round"/></svg>
<div class="a" style="left:509px;top:1131.8px;width:28px;height:28.1px;background:#000;border-radius:3px;"></div>
<svg style="left:0;top:0" width="1" height="1"><path d="M620.63 1139.12A13.55 13.55 0 1 0 618.97 1154.97" fill="none" stroke="#e8e8e8" stroke-width="4.9"/><path d="M620.6 1129.9H625.1V1144H611V1139.7H617.8L620.6 1136.5Z" fill="#e8e8e8"/></svg>
<svg style="left:0;top:0" width="1" height="1"><circle cx="847.5" cy="1142.8" r="10.3" fill="none" stroke="#000" stroke-width="5"/><path d="M856.0 1151.3L864.5 1159.8" stroke="#000" stroke-width="5" stroke-linecap="round"/><path d="M841.6 1142.8H853.4M847.5 1136.9V1148.7" stroke="#000" stroke-width="3.6"/></svg>
<svg style="left:0;top:0" width="1" height="1"><circle cx="897.6" cy="1142.8" r="10.3" fill="none" stroke="#000" stroke-width="5"/><path d="M906.1 1151.3L914.6 1159.8" stroke="#000" stroke-width="5" stroke-linecap="round"/><path d="M891.6 1142.8H903.6" stroke="#000" stroke-width="4"/></svg>
<svg style="left:0;top:0" width="1" height="1"><circle cx="949.3" cy="1142.8" r="10.3" fill="none" stroke="#000" stroke-width="5"/><path d="M957.8 1151.3L966.3 1159.8" stroke="#000" stroke-width="5" stroke-linecap="round"/><path d="M932 1139.2V1162.5M970.9 1139.2V1162.5" stroke="#000" stroke-width="1.8"/></svg>
<svg style="left:0;top:0" width="1" height="1"><circle cx="1000.3" cy="1142.8" r="10.3" fill="none" stroke="#000" stroke-width="5"/><path d="M1008.8 1151.3L1017.3 1159.8" stroke="#000" stroke-width="5" stroke-linecap="round"/></svg>
<div class="a" style="left:1049px;top:80px;width:3px;height:1092px;background:#888;"></div>
<div class="a" style="left:1052px;top:80px;width:1424px;height:1092px;background:#444;"></div>
<div class="a" style="left:1052px;top:80px;width:1424px;height:40px;background:#353839;"></div>
<div class="a" style="left:1056.8px;top:84px;width:146.2px;height:36px;background:#454545;"></div>
<div class="a" style="left:1200.8px;top:85px;width:2px;height:31px;background:#a8a8a8;"></div>
<div class="t" style="left:1069.7px;top:91.9px;font-size:18.84px;letter-spacing:-0.425px;color:#fff;">Inspector</div>
<svg style="left:0;top:0" width="1" height="1"><path d="M1164.4 94.2L1173.9 103.7M1173.9 94.2L1164.4 103.7" stroke="#fff" stroke-width="3.3" stroke-linecap="round"/></svg>
<div class="t" style="left:1078.4px;top:152.7px;font-size:17.83px;letter-spacing:-0.062px;color:#fff;font-weight:700;">Event [New Event]</div>
<div class="t" style="left:1078.4px;top:191.6px;font-size:17.68px;letter-spacing:-0.15px;color:#fff;">Path:</div>
<div class="t" style="left:1278.4px;top:191.6px;font-size:17.68px;letter-spacing:-0.213px;color:#fff;">New Event</div>
<div class="t" style="left:1078.4px;top:226.8px;font-size:17.68px;letter-spacing:0.512px;color:#fff;">Duration:</div>
<div class="t" style="left:1277.9px;top:226.8px;font-size:17.43px;letter-spacing:-0.229px;color:#fff;">3.27027s</div>
<div class="t" style="left:1078.4px;top:263.8px;font-size:17.68px;letter-spacing:-0.27px;color:#fff;">Frame Rate:</div>
<div class="t" style="left:1078.4px;top:300.9px;font-size:17.68px;letter-spacing:0.3px;color:#fff;">Pre-roll:</div>
<div class="t" style="left:1277.9px;top:300.9px;font-size:17.43px;letter-spacing:0.15px;color:#fff;">0ms</div>
<div class="t" style="left:1078.4px;top:333.8px;font-size:17.68px;letter-spacing:0.289px;color:#fff;">Post-roll:</div>
<div class="t" style="left:1277.9px;top:333.8px;font-size:17.43px;letter-spacing:0.15px;color:#fff;">0ms</div>
<div class="t" style="left:1078.4px;top:367.3px;font-size:17.68px;letter-spacing:-0.091px;color:#fff;">Phonetic Analysis Score:</div>
<div class="t" style="left:1277.9px;top:367.3px;font-size:17.43px;letter-spacing:-0.4px;color:#fff;">0%</div>
<div class="t" style="left:1079.4px;top:400.5px;font-size:17.68px;letter-spacing:0.282px;color:#fff;">Animation Updated:</div>
<div class="t" style="left:1079.4px;top:432.8px;font-size:17.68px;letter-spacing:-0.273px;color:#fff;">Visualizers:</div>
<div class="t" style="left:1078.4px;top:617.8px;font-size:17.97px;letter-spacing:-0.386px;color:#fff;font-weight:700;">Sequence</div>
<div class="t" style="left:1078.4px;top:655.6px;font-size:17.68px;letter-spacing:-0.326px;color:#fff;">Select a sequence...</div>
<div class="t" style="left:1279.6px;top:400.5px;font-size:17.68px;letter-spacing:0.4px;color:#e05555;">No</div>
<div class="a" style="left:1279px;top:254.3px;width:168.7px;height:31px;background:#454545;border-top:1.5px solid #1e1e1e;border-left:1.5px solid #1e1e1e;border-right:1px solid #4e4e4e;border-bottom:1px solid #4e4e4e;"></div>
<div class="t" style="left:1284.2px;top:263.8px;font-size:17.43px;letter-spacing:0.2px;color:#fff;">30</div>
<div class="a" style="left:1079.4px;top:461px;width:368.3px;height:114.5px;background:#454545;border-top:1.5px solid #1e1e1e;border-left:1.5px solid #1e1e1e;border-right:1px solid #4e4e4e;border-bottom:1px solid #4e4e4e;"></div>
<div class="a" style="left:1079.4px;top:598.5px;width:368.3px;height:2px;background:#9a9a9a;"></div>
</div>
<div id="bord"></div>
</body></html>
